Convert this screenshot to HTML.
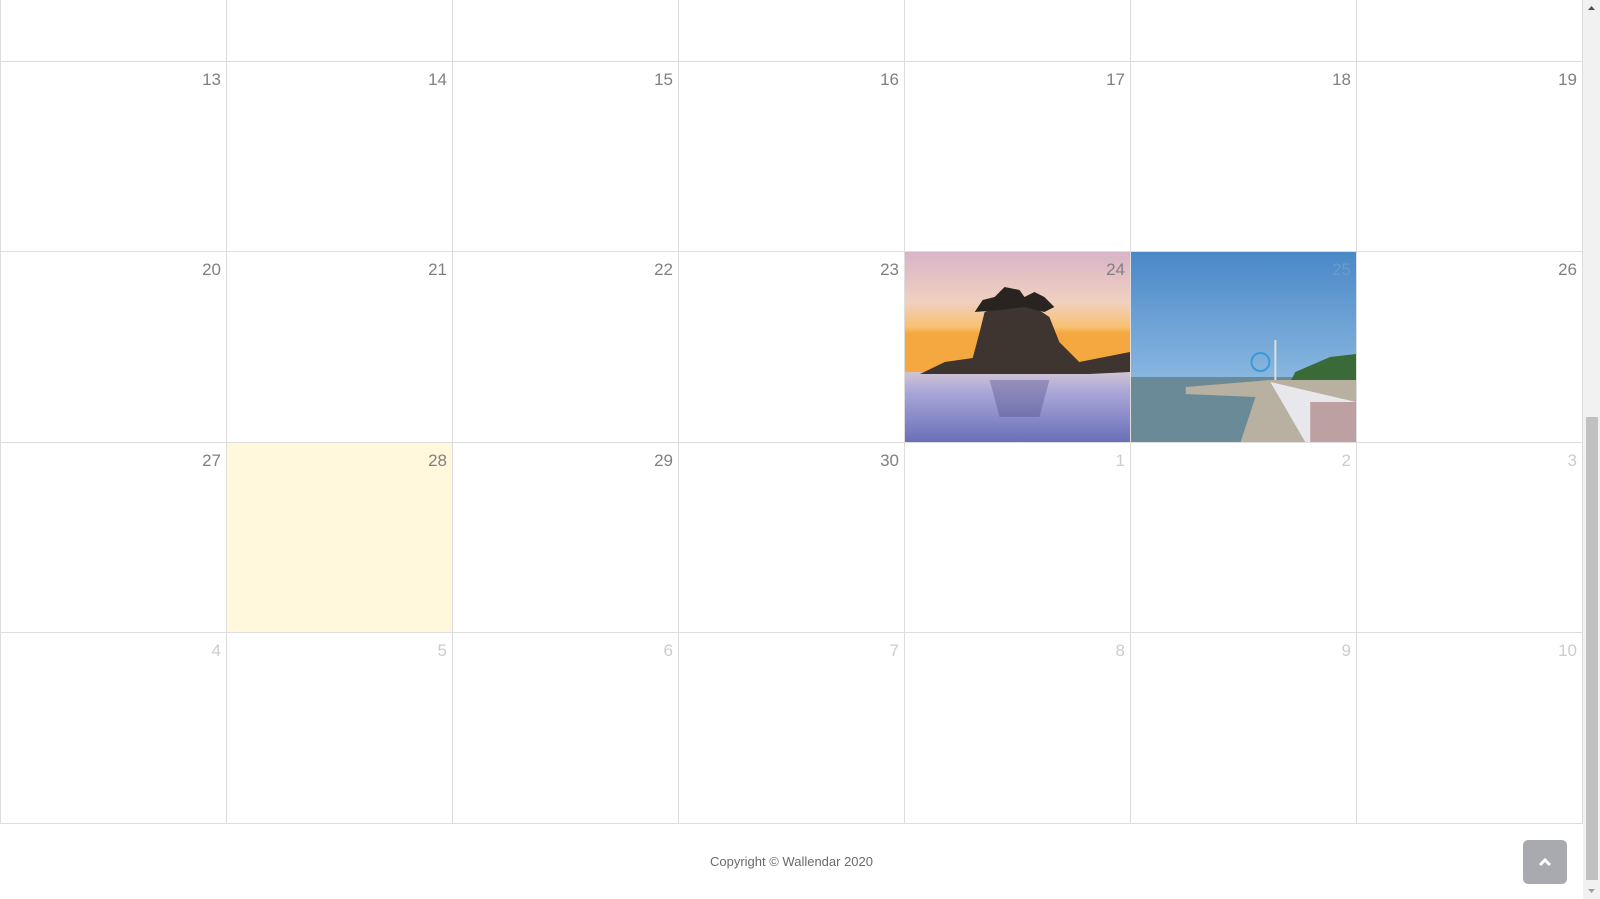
<!DOCTYPE html>
<html><head><style>
html,body{margin:0;padding:0;width:1600px;height:899px;overflow:hidden;background:#fff;font-family:"Liberation Sans",sans-serif}
.grid{position:absolute;left:0;top:-129px;width:1583px;}
.row{position:relative;height:189.5px;border-bottom:1px solid #ddd;display:flex}
.cell{flex:1;border-left:1px solid #ddd;position:relative;overflow:hidden}
.cell:last-child{border-right:1px solid #ddd}
.n{position:absolute;right:5px;top:8px;font-size:17px;color:#808080;z-index:2}
.o .n{color:#ccc}
.today{background:#fff8dd}
.footer{position:absolute;top:854px;left:0;width:1583px;text-align:center;font-size:13px;color:#6a6a6a}
.btn{position:absolute;left:1523px;top:840px;width:44px;height:44px;background:#a9a9b0;border-radius:5px}
.sb{position:absolute;left:1583px;top:0;width:17px;height:899px;background:#f1f1f1}
.thumb{position:absolute;left:1586px;top:417px;width:12px;height:463px;background:#c1c1c1}
</style></head><body>
<div class="grid">
<div class="row"><div class="cell"></div><div class="cell"></div><div class="cell"></div><div class="cell"></div><div class="cell"></div><div class="cell"></div><div class="cell"></div></div>
<div class="row"><div class="cell"><span class="n">13</span></div><div class="cell"><span class="n">14</span></div><div class="cell"><span class="n">15</span></div><div class="cell"><span class="n">16</span></div><div class="cell"><span class="n">17</span></div><div class="cell"><span class="n">18</span></div><div class="cell"><span class="n">19</span></div></div>
<div class="row"><div class="cell"><span class="n">20</span></div><div class="cell"><span class="n">21</span></div><div class="cell"><span class="n">22</span></div><div class="cell"><span class="n">23</span></div>
<div class="cell"><svg width="100%" height="190" viewBox="0 0 226 190" preserveAspectRatio="none" style="position:absolute;left:0;top:0">
<defs><linearGradient id="s" x1="0" y1="0" x2="0" y2="1"><stop offset="0" stop-color="#d8b4c8"/><stop offset=".4" stop-color="#f0d0c0"/><stop offset=".6" stop-color="#f8c070"/><stop offset=".65" stop-color="#f5a840"/></linearGradient>
<linearGradient id="w" x1="0" y1="0" x2="0" y2="1"><stop offset="0" stop-color="#d0c4d4"/><stop offset=".3" stop-color="#a8a6d8"/><stop offset="1" stop-color="#6a70b8"/></linearGradient></defs>
<rect width="226" height="125" fill="url(#s)"/>
<rect y="120" width="226" height="70" fill="url(#w)"/>
<path d="M15 122 L40 110 L68 106 L75 80 L80 60 L100 52 L130 55 L145 65 L155 90 L175 110 L226 100 L226 120 L185 122 Z" fill="#3e3430"/>
<path d="M70 60 L78 48 L90 45 L100 35 L115 38 L120 45 L130 40 L140 45 L150 55 L140 60 L120 55 L95 58 Z" fill="#2a2420"/>
<path d="M85 128 L145 128 L135 165 L95 165 Z" fill="#4a4880" opacity=".35"/>
</svg><span class="n">24</span></div>
<div class="cell"><svg width="100%" height="190" viewBox="0 0 226 190" preserveAspectRatio="none" style="position:absolute;left:0;top:0">
<defs><linearGradient id="b" x1="0" y1="0" x2="0" y2="1"><stop offset="0" stop-color="#4a88c8"/><stop offset="1" stop-color="#8ab8e0"/></linearGradient></defs>
<rect width="226" height="130" fill="url(#b)"/>
<rect y="125" width="226" height="65" fill="#6a8a98"/>
<path d="M165 120 L200 105 L226 102 L226 130 L160 130 Z" fill="#3a6a38"/>
<path d="M55 135 L140 128 L226 128 L226 190 L110 190 L125 145 L55 142 Z" fill="#b8b0a0"/>
<path d="M140 130 L226 150 L226 190 L175 190 Z" fill="#e8e8ec"/>
<rect x="180" y="150" width="46" height="40" fill="#a07070" opacity=".6"/>
<circle cx="130" cy="110" r="9" fill="none" stroke="#3a9ad8" stroke-width="2"/>
<rect x="144" y="88" width="2" height="40" fill="#ddd"/>
</svg><span class="n" style="color:#6a9ac8">25</span></div>
<div class="cell"><span class="n">26</span></div></div>
<div class="row"><div class="cell"><span class="n">27</span></div><div class="cell today"><span class="n">28</span></div><div class="cell"><span class="n">29</span></div><div class="cell"><span class="n">30</span></div><div class="cell o"><span class="n">1</span></div><div class="cell o"><span class="n">2</span></div><div class="cell o"><span class="n">3</span></div></div>
<div class="row"><div class="cell o"><span class="n">4</span></div><div class="cell o"><span class="n">5</span></div><div class="cell o"><span class="n">6</span></div><div class="cell o"><span class="n">7</span></div><div class="cell o"><span class="n">8</span></div><div class="cell o"><span class="n">9</span></div><div class="cell o"><span class="n">10</span></div></div>
</div>
<div class="footer">Copyright © Wallendar 2020</div>
<div class="btn"><svg width="44" height="44"><path d="M17 25 L22 20 L27 25" fill="none" stroke="#fff" stroke-width="3"/></svg></div>
<div class="sb"></div><div class="thumb"></div>
<svg style="position:absolute;left:1583px;top:0" width="17" height="899"><path d="M5 10 L12 10 L8.5 6Z" fill="#505050"/><path d="M5 889 L12 889 L8.5 893Z" fill="#a0a0a0"/></svg>
</body></html>
